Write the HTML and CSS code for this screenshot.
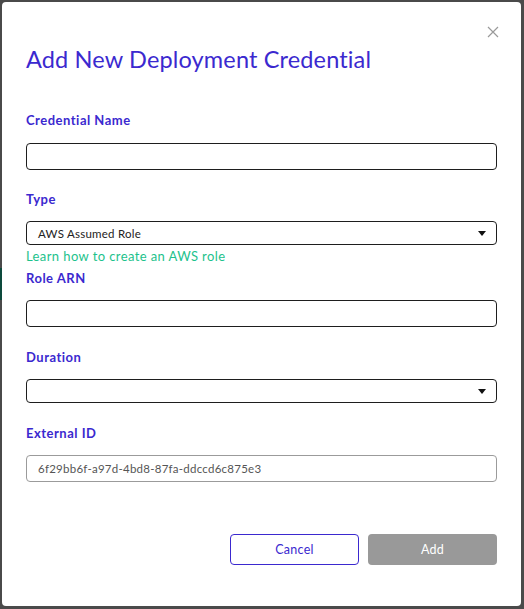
FILE: index.html
```html
<!DOCTYPE html>
<html>
<head>
<meta charset="utf-8">
<link rel="stylesheet" href="styles.css">
</head>
<body>
<div class="backdrop">
  <div class="edge-green"></div>
  <div class="modal">
    <button class="close" aria-label="Close">
      <svg width="12" height="12" viewBox="0 0 12 12"><path d="M1 1 L11 11 M11 1 L1 11" stroke="#9a9a9a" stroke-width="1.2" fill="none"/></svg>
    </button>
    <h1 class="title">Add New Deployment Credential</h1>
    <form class="form">
      <label class="label first">Credential Name</label>
      <div class="input"></div>
      <label class="label type">Type</label>
      <div class="select"><span>AWS Assumed Role</span><span class="caret"></span></div>
      <a class="link">Learn how to create an AWS role</a>
      <label class="label after-link">Role ARN</label>
      <div class="input"></div>
      <label class="label">Duration</label>
      <div class="select"><span></span><span class="caret"></span></div>
      <label class="label">External ID</label>
      <div class="input readonly"><span>6f29bb6f-a97d-4bd8-87fa-ddccd6c875e3</span></div>
      <div class="actions">
        <div class="btn cancel">Cancel</div>
        <div class="btn add">Add</div>
      </div>
    </form>
  </div>
</div>
</body>
</html>
```

FILE: styles.css
```css
* { box-sizing: border-box; }
html, body { margin: 0; padding: 0; }
body {
  width: 524px;
  height: 609px;
  background: #4a4a4a;
  font-family: "Lato", "Liberation Sans", sans-serif;
  overflow: hidden;
}
.backdrop {
  position: relative;
  width: 524px;
  height: 609px;
  padding: 2px 3px 3px 2px;
}
.edge-green {
  position: absolute;
  left: 0;
  top: 268px;
  width: 2px;
  height: 32px;
  background: #0d4a3c;
}
.modal {
  position: relative;
  background: #fff;
  width: 519px;
  height: 604px;
  border-radius: 4px;
  padding: 0 24px;
}
.close {
  position: absolute;
  top: 23px;
  right: 21px;
  width: 14px;
  height: 14px;
  padding: 0;
  border: none;
  background: none;
  display: flex;
  align-items: center;
  justify-content: center;
}
.title {
  margin: 0;
  padding-top: 43px;
  font-size: 23.5px;
  line-height: 28px;
  font-weight: 400;
  color: #3b29cf;
  letter-spacing: 0.15px;
}
.form {
  display: flex;
  flex-direction: column;
}
.label {
  display: block;
  font-size: 13px;
  line-height: 16px;
  font-weight: 700;
  color: #3b29cf;
  letter-spacing: 0.5px;
  margin: 22px 0 14px;
}
.label.first { margin-top: 39px; margin-bottom: 15px; }
.label.type { margin-top: 21px; }
.label.after-link { margin-top: 6px; }
.input {
  height: 27px;
  border: 1px solid #1e1e1e;
  border-radius: 4px;
  display: flex;
  align-items: center;
  padding: 0 11px;
  font-size: 11.5px;
  letter-spacing: 0.25px;
}
.input.readonly {
  border-color: #9b9b9b;
  color: #555;
}
.select {
  height: 24px;
  border: 1px solid #1e1e1e;
  border-radius: 4px;
  display: flex;
  align-items: center;
  justify-content: space-between;
  padding: 0 10px 0 11px;
  font-size: 11.5px;
  letter-spacing: 0.25px;
  color: #222;
}
.caret {
  width: 0;
  height: 0;
  border-left: 4.5px solid transparent;
  border-right: 4.5px solid transparent;
  border-top: 5px solid #111;
}
.link {
  margin-top: 3px;
  font-size: 13px;
  line-height: 16px;
  letter-spacing: 0.4px;
  color: #1dc28c;
}
.actions {
  display: flex;
  justify-content: flex-end;
  gap: 9px;
  margin-top: 52px;
}
.btn {
  width: 129px;
  height: 31px;
  border-radius: 4px;
  display: flex;
  align-items: center;
  justify-content: center;
  font-size: 12.5px;
  letter-spacing: 0.3px;
}
.cancel {
  border: 1px solid #3b29cf;
  color: #3b29cf;
}
.add {
  background: #999999;
  color: #fff;
}
```
